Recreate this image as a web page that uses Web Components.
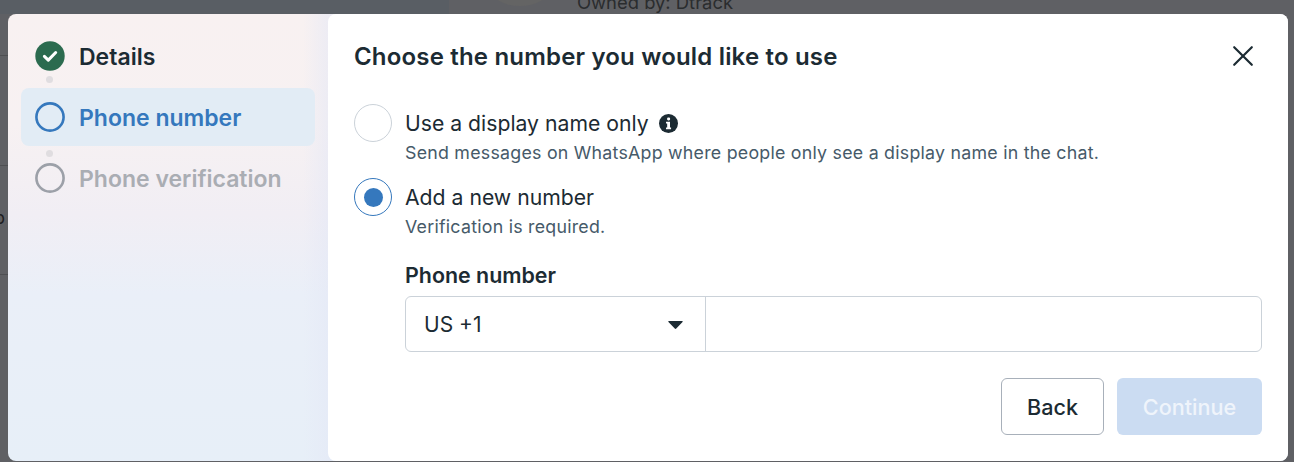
<!DOCTYPE html>
<html>
<head>
<meta charset="utf-8">
<style>
html, body { margin: 0; height: 100%; overflow: hidden; background: #5f6064; }
body { font-family: Inter, "Noto Sans", sans-serif; color: #1c2b33; }
</style>
</head>
<body>
<page-backdrop></page-backdrop>
<wizard-dialog heading="Choose the number you would like to use">
  <wizard-step slot="steps" state="done">Details</wizard-step>
  <wizard-step slot="steps" state="active">Phone number</wizard-step>
  <wizard-step slot="steps" state="todo">Phone verification</wizard-step>

  <radio-option info>Use a display name only
    <span slot="hint">Send messages on WhatsApp where people only see a display name in the chat.</span>
  </radio-option>
  <radio-option checked>Add a new number
    <span slot="hint">Verification is required.</span>
  </radio-option>
  <phone-field label="Phone number" country="US +1"></phone-field>

  <wizard-button slot="actions">Back</wizard-button>
  <wizard-button slot="actions" primary disabled>Continue</wizard-button>
</wizard-dialog>

<script>
customElements.define('page-backdrop', class extends HTMLElement {
    constructor() {
        super()
        let sr = this.attachShadow({mode: 'open'})
        sr.innerHTML = `
<style>
:host { display: block; position: absolute; inset: 0; overflow: hidden; }
.left { position: absolute; left: 0; top: 0; width: 449px; height: 14px; background: #595e64; }
.owner { position: absolute; left: 577px; top: -8px; font-size: 18.4px; line-height: 20px; color: #2a2c2e; white-space: nowrap; }
.blob { position: absolute; left: 490px; top: -30px; width: 60px; height: 36px; border-radius: 50%; background: #646464; }
.rule { position: absolute; left: 0; width: 8px; height: 1px; background: #4e4f52; }
.o { position: absolute; left: -6px; top: 208px; font-size: 18px; line-height: 20px; color: #1f2022; }
</style>
<div class="left"></div>
<div class="blob"></div>
<div class="owner">Owned by: Dtrack</div>
<div class="rule" style="top:55px"></div>
<div class="rule" style="top:165px"></div>
<div class="rule" style="top:274px"></div>
<div class="o">p</div>`
    }
})

customElements.define('wizard-dialog', class extends HTMLElement {
    constructor() {
        super()
        let heading = this.getAttribute('heading') || ''
        let sr = this.attachShadow({mode: 'open'})
        sr.innerHTML = `
<style>
:host {
  display: flex;
  position: absolute;
  left: 8px; top: 14px;
  width: 1280px; height: 447px;
  border-radius: 8px;
  overflow: hidden;
  background:
    radial-gradient(140px 150px at 100% 100%, #e2eef9 0%, rgba(226,238,249,0) 100%),
    linear-gradient(90deg, rgba(228,232,246,0) 295px, rgba(228,232,246,.55) 320px),
    linear-gradient(180deg, #f8f1f1 0, #f7f1f2 110px, #f1eef4 200px, #eaeff8 280px, #e7eff8 100%);
}
nav {
  width: 320px;
  box-sizing: border-box;
  flex: none;
  padding: 13.5px 13px 0;
  display: flex;
  flex-direction: column;
  gap: 3px;
}
main {
  flex: 1;
  background: #fff;
  border-radius: 8px 0 0 8px;
  padding: 0 26px;
  display: flex;
  flex-direction: column;
  position: relative;
}
header {
  height: 86px;
  display: flex;
  align-items: center;
  justify-content: space-between;
  flex: none;
}
h1 { margin: 0; font-size: 24px; font-weight: 600; line-height: 28px; letter-spacing: .18px; position: relative; top: -.5px; }
button {
  border: 0; background: none; padding: 0; margin-right: 7px;
  width: 24px; height: 24px; display: flex; align-items: center; justify-content: center;
  position: relative; top: -1.5px;
}
.body { display: flex; flex-direction: column; flex: 1; padding-top: 4px; }
footer { display: flex; justify-content: flex-end; gap: 13px; margin: 26px 0 0 0; padding-right: 0; }
</style>
<nav><slot name="steps"></slot></nav>
<main>
  <header>
    <h1>${heading}</h1>
    <button aria-label="Close">
      <svg width="24" height="24" viewBox="0 0 24 24" fill="none" stroke="#1c2b33" stroke-width="2.2" stroke-linecap="round">
        <path d="M3.2 3.2 20.8 20.8M20.8 3.2 3.2 20.8"/>
      </svg>
    </button>
  </header>
  <div class="body">
    <slot></slot>
    <footer><slot name="actions"></slot></footer>
  </div>
</main>`
    }
})

customElements.define('wizard-step', class extends HTMLElement {
    constructor() {
        super()
        let state = this.getAttribute('state') || 'todo'
        let mark = state == 'done'
            ? `<svg width="30" height="30" viewBox="0 0 30 30"><circle cx="15" cy="15" r="14.7" fill="#2b6b4f"/><path d="M9.4 15.4l3.9 3.7 7.4-7.6" fill="none" stroke="#fff" stroke-width="3" stroke-linecap="round" stroke-linejoin="round"/></svg>`
            : `<svg width="30" height="30" viewBox="0 0 30 30"><circle cx="15" cy="15" r="13.6" fill="none" stroke="currentColor" stroke-width="2.6"/></svg>`
        let sr = this.attachShadow({mode: 'open'})
        sr.innerHTML = `
<style>
:host {
  display: flex;
  align-items: center;
  gap: 14px;
  height: 57.5px;
  padding-left: 14px;
  border-radius: 8px;
  font-size: 23px;
  font-weight: 600;
  position: relative;
  color: #1c2b33;
}
:host([state=active]) { background: #e2ecf5; color: #3578bd; }
:host([state=todo]) { color: #aaadb3; margin-top: 1px; }
:host([state=todo]) svg { color: #9ca0a8; }
:host([state=todo])::before, :host([state=done])::after {
  content: '';
  position: absolute;
  left: 25px;
  width: 7px; height: 7px;
  border-radius: 50%;
  background: #e0dde0;
}
:host([state=done])::after { bottom: 2px; }
:host([state=todo])::before { top: 0; }
svg { display: block; flex: none; }
span { position: relative; top: 1px; }
</style>
${mark}<span><slot></slot></span>`
    }
})

customElements.define('radio-option', class extends HTMLElement {
    constructor() {
        super()
        let on = this.hasAttribute('checked')
        let info = this.hasAttribute('info') ? `<svg class="i" width="19" height="19" viewBox="0 0 20 20"><circle cx="10" cy="10" r="10" fill="#1c2b33"/><rect x="8.5" y="3.8" width="3.2" height="3" rx="1.2" fill="#fff"/><path d="M7.4 8.2h4.2v6.1h1.1v1.7H7.4v-1.7h1.2V9.9H7.4z" fill="#fff"/></svg>` : ''
        let sr = this.attachShadow({mode: 'open'})
        sr.innerHTML = `
<style>
:host { display: flex; gap: 13px; height: 74px; }
.dot {
  width: 38px; height: 38px; box-sizing: border-box; flex: none; border-radius: 50%;
  border: 1px solid #cbd2d9; background: #fff;
  display: flex; align-items: center; justify-content: center;
}
:host([checked]) .dot { border: 1.5px solid #3578bd; }
.dot i { width: 19px; height: 19px; border-radius: 50%; background: #3578bd; display: block; }
.label { font-size: 21.2px; line-height: 38px; height: 38px; display: flex; align-items: center; gap: 10px; white-space: nowrap; }
.hint { font-size: 17.8px; letter-spacing: .24px; line-height: 20px; color: #465a69; white-space: nowrap; padding-top: 1px; }
.i { display: block; }
</style>
<div class="dot">${on ? '<i></i>' : ''}</div>
<div>
  <div class="label"><span><slot></slot></span>${info}</div>
  <div class="hint"><slot name="hint"></slot></div>
</div>`
    }
})

customElements.define('phone-field', class extends HTMLElement {
    constructor() {
        super()
        let sr = this.attachShadow({mode: 'open'})
        sr.innerHTML = `
<style>
:host { display: block; margin-left: 51px; padding-top: 11px; }
label { display: block; font-size: 21.4px; font-weight: 600; line-height: 24px; margin-bottom: 9px; }
.box { display: flex; height: 56px; box-sizing: border-box; border: 1px solid #cbd2d9; border-radius: 6px; }
.cc {
  width: 300px; box-sizing: border-box; flex: none;
  border-right: 1px solid #cbd2d9;
  padding: 0 22px 0 18px;
  display: flex; align-items: center; justify-content: space-between;
  font-size: 21px;
}
.num { flex: 1; }
svg { display: block; position: relative; top: 1px; }
</style>
<label>${this.getAttribute('label')}</label>
<div class="box">
  <div class="cc"><span>${this.getAttribute('country')}</span>
    <svg width="15" height="10" viewBox="0 0 16 10"><path d="M1 .6h14c.6 0 .9.7.5 1.1L8.8 8.8c-.4.5-1.2.5-1.6 0L.5 1.7C.1 1.3.4.6 1 .6z" fill="#1c2b33"/></svg>
  </div>
  <div class="num"></div>
</div>`
    }
})

customElements.define('wizard-button', class extends HTMLElement {
    constructor() {
        super()
        let sr = this.attachShadow({mode: 'open'})
        sr.innerHTML = `
<style>
:host {
  display: flex; align-items: center; justify-content: center;
  height: 57px; box-sizing: border-box;
  width: 103px;
  border: 1px solid #a8b0ba; border-radius: 6px;
  font-size: 21.6px; font-weight: 500; background: #fff; color: #1c2b33;
}
:host([primary]) { width: 145px; border: 0; background: #cbdcf2; color: #eff4fb; }
</style>
<slot></slot>`
    }
})
</script>
</body>
</html>
